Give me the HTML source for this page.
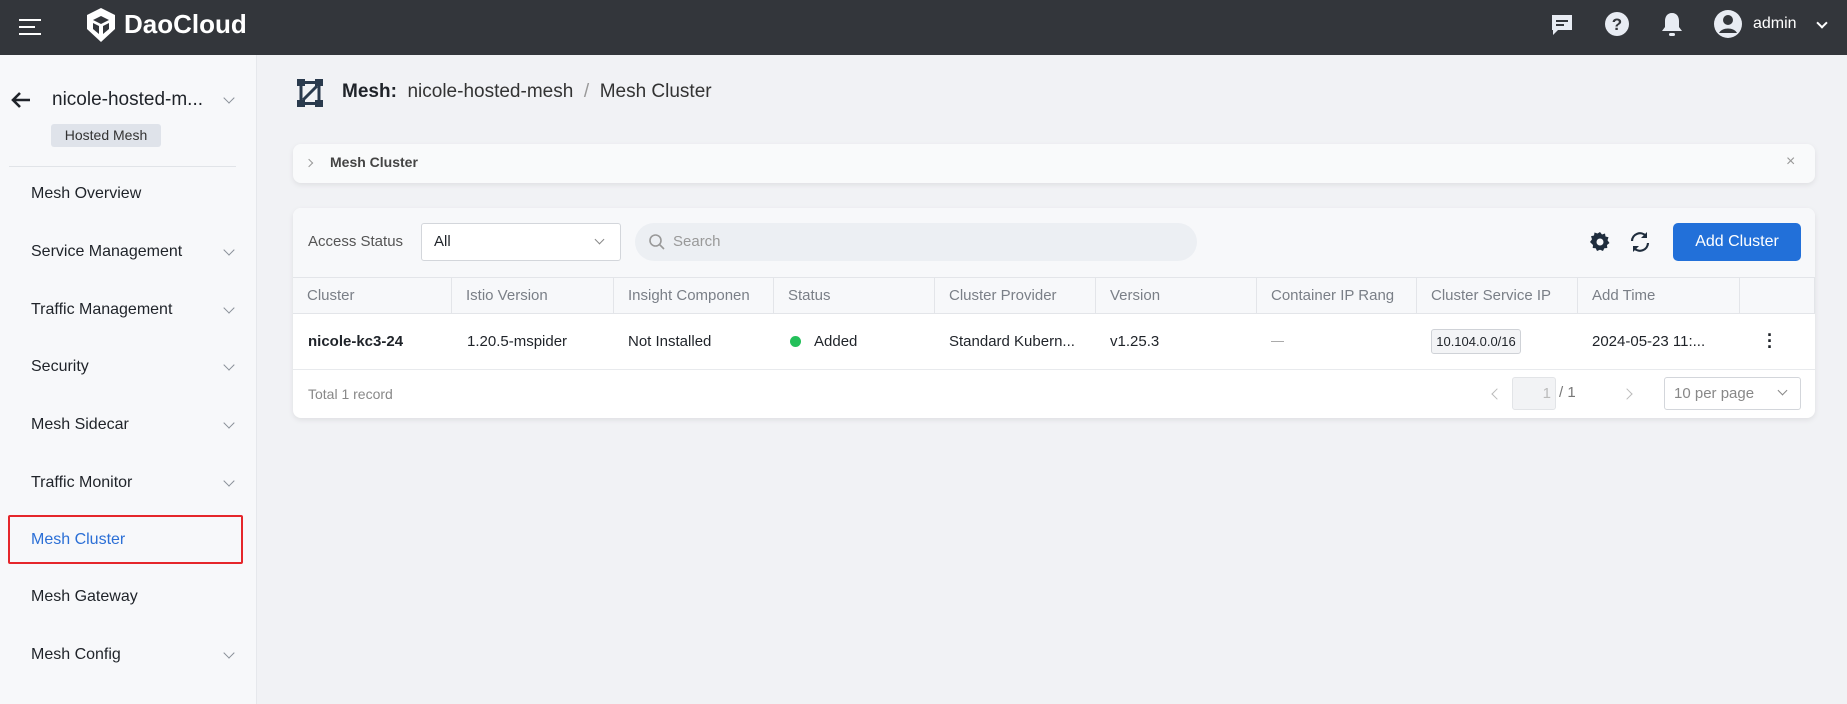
<!DOCTYPE html>
<html><head><meta charset="utf-8"><style>
*{box-sizing:border-box;margin:0;padding:0}
body{width:1847px;height:704px;overflow:hidden;background:#f1f2f5;font-family:"Liberation Sans",sans-serif;color:#1f2329;position:relative}
.abs{position:absolute}
.hdr{left:0;top:0;width:1847px;height:55px;background:#33363b}
.side{left:0;top:55px;width:257px;height:649px;background:#f7f8fa;border-right:1px solid #e6e8ec}
.nav{position:absolute;left:31px;font-size:16px;color:#1f2329}
.chev{position:absolute;left:225px;width:8px;height:8px;border-right:1.5px solid #8a9099;border-bottom:1.5px solid #8a9099;transform:rotate(45deg)}
.card{background:#fff;border-radius:8px;box-shadow:0 2px 6px rgba(0,0,0,.08)}
.th{position:absolute;top:277px;height:37px;line-height:37px;font-size:15px;color:#7a7f87;padding-left:14px;border-right:1px solid #e3e5e9;white-space:nowrap;overflow:hidden}
.td{position:absolute;top:333px;font-size:15px;color:#1f2329;white-space:nowrap}
</style></head><body>
<div class="abs hdr"></div>
<div class="abs" style="left:19px;top:19px;width:22px;height:2px;background:#fff"></div>
<div class="abs" style="left:19px;top:26px;width:16px;height:2px;background:#fff"></div>
<div class="abs" style="left:19px;top:33px;width:22px;height:2px;background:#fff"></div>
<svg class="abs" style="left:85px;top:7px" width="32" height="36" viewBox="0 0 32 36"><path d="M16 1 L30 8 L30 22 L16 35 L2 22 L2 8 Z" fill="#fff"/><path d="M16 9 L24 13 L16 17 L8 13 Z M8 16 L14 19 L14 27 L8 22Z M24 16 L18 19 L18 27 L24 22Z" fill="#33363b"/></svg>
<div class="abs" style="left:124px;top:9px;font-size:26px;font-weight:bold;color:#fff">DaoCloud</div>
<svg class="abs" style="left:1549px;top:12px" width="26" height="26" viewBox="0 0 26 26"><path d="M3 3h20v15H9l-5 5v-5H3z" fill="#e8ecf3"/><rect x="7" y="8" width="12" height="2" fill="#33363b"/><rect x="7" y="12" width="8" height="2" fill="#33363b"/></svg>
<svg class="abs" style="left:1604px;top:11px" width="26" height="26"><circle cx="13" cy="13" r="12" fill="#e8ecf3"/><text x="13" y="19" font-size="17" font-weight="bold" text-anchor="middle" fill="#33363b" font-family="Liberation Sans">?</text></svg>
<svg class="abs" style="left:1659px;top:10px" width="26" height="28" viewBox="0 0 26 28"><path d="M13 3c-5 0-7 4-7 8v6l-3 4h20l-3-4v-6c0-4-2-8-7-8z" fill="#e8ecf3"/><rect x="10" y="23" width="6" height="3" rx="1.5" fill="#e8ecf3"/></svg>
<svg class="abs" style="left:1713px;top:9px" width="30" height="30"><circle cx="15" cy="15" r="14" fill="#e8ecf3"/><circle cx="15" cy="11" r="5" fill="#33363b"/><path d="M6 24c3-6 15-6 18 0" fill="#33363b"/></svg>
<div class="abs" style="left:1753px;top:15px;font-size:16px;color:#fff">admin</div>
<div class="abs" style="left:1818px;top:19px;width:8px;height:8px;border-right:2px solid #fff;border-bottom:2px solid #fff;transform:rotate(45deg)"></div>

<div class="abs side"></div>
<svg class="abs" style="left:10px;top:90px" width="22" height="20"><path d="M20 10H3M10 3L3 10l7 7" stroke="#1f2329" stroke-width="2.6" fill="none"/></svg>
<div class="abs" style="left:52px;top:89px;font-size:19px;color:#1f2329">nicole-hosted-m...</div>
<div class="chev" style="top:94px"></div>
<div class="abs" style="left:51px;top:124px;width:110px;height:23px;background:#dfe3ea;border-radius:3px;font-size:14px;line-height:23px;text-align:center;color:#333">Hosted Mesh</div>
<div class="abs" style="left:9px;top:166px;width:227px;height:1px;background:#e1e4e8"></div>
<div class="nav" style="top:185px">Mesh Overview</div>
<div class="nav" style="top:243px">Service Management</div><div class="chev" style="top:246px"></div>
<div class="nav" style="top:301px">Traffic Management</div><div class="chev" style="top:304px"></div>
<div class="nav" style="top:358px">Security</div><div class="chev" style="top:361px"></div>
<div class="nav" style="top:416px">Mesh Sidecar</div><div class="chev" style="top:419px"></div>
<div class="nav" style="top:474px">Traffic Monitor</div><div class="chev" style="top:477px"></div>
<div class="abs" style="left:8px;top:515px;width:235px;height:49px;border:2px solid #e5262b;border-radius:2px"></div>
<div class="nav" style="top:531px;color:#2b6fd6">Mesh Cluster</div>
<div class="nav" style="top:588px">Mesh Gateway</div>
<div class="nav" style="top:646px">Mesh Config</div><div class="chev" style="top:649px"></div>

<svg class="abs" style="left:296px;top:78px" width="28" height="30" viewBox="0 0 28 30"><rect x="1" y="1" width="8" height="7" fill="#2a3a4d"/><rect x="19" y="1" width="8" height="7" fill="#2a3a4d"/><rect x="1" y="22" width="8" height="7" fill="#2a3a4d"/><rect x="19" y="22" width="8" height="7" fill="#2a3a4d"/><path d="M9 4.5h10M9 25.5h10M21 8L7 22M5 8v14M23 8v14" stroke="#2a3a4d" stroke-width="3" fill="none"/></svg>
<div class="abs" style="left:342px;top:81px;font-size:19px"><b>Mesh:</b>&nbsp; <span style="color:#333">nicole-hosted-mesh</span> &nbsp;<span style="color:#999">/</span>&nbsp; <span style="color:#333">Mesh Cluster</span></div>

<div class="abs card" style="left:293px;top:144px;width:1522px;height:39px;background:#f9fafb"></div>
<div class="abs" style="left:306px;top:160px;width:6px;height:6px;border-right:1.5px solid #999;border-top:1.5px solid #999;transform:rotate(45deg)"></div>
<div class="abs" style="left:330px;top:154px;font-size:14px;font-weight:bold;color:#444">Mesh Cluster</div>
<div class="abs" style="left:1786px;top:153px;font-size:16px;color:#999">×</div>

<div class="abs card" style="left:293px;top:208px;width:1522px;height:210px;overflow:hidden">
 <div style="position:absolute;left:0;top:0;width:100%;height:106px;background:#f7f8fa"></div>
</div>
<div class="abs" style="left:308px;top:233px;font-size:15px;color:#555">Access Status</div>
<div class="abs" style="left:421px;top:223px;width:200px;height:38px;background:#fff;border:1px solid #d3d6db;border-radius:3px"></div>
<div class="abs" style="left:434px;top:233px;font-size:15px">All</div>
<div class="abs" style="left:596px;top:236px;width:7px;height:7px;border-right:1.3px solid #888;border-bottom:1.3px solid #888;transform:rotate(45deg)"></div>
<div class="abs" style="left:635px;top:223px;width:562px;height:38px;background:#eceff3;border-radius:19px"></div>
<svg class="abs" style="left:648px;top:233px" width="18" height="18"><circle cx="7.5" cy="7.5" r="5.5" stroke="#999" stroke-width="1.6" fill="none"/><path d="M11.5 11.5l4.5 4.5" stroke="#999" stroke-width="1.6"/></svg>
<div class="abs" style="left:673px;top:233px;font-size:15px;color:#999">Search</div>
<svg class="abs" style="left:1589px;top:231px" width="22" height="22" viewBox="0 0 22 22"><path d="M11 1l2 2.5 3-1 .5 3 3 .8-1 3 2 2.7-2.5 2 .3 3-3 .3-1.3 2.7-3-1.3-3 1.3-1.3-2.7-3-.3.3-3L1 11l2-2.7-1-3 3-.8.5-3 3 1z" fill="#1f2d3d"/><circle cx="11" cy="11" r="3.5" fill="#f7f8fa"/></svg>
<svg class="abs" style="left:1628px;top:230px" width="24" height="24" viewBox="0 0 24 24"><path d="M4 11a8 8 0 0 1 14-5M20 13a8 8 0 0 1-14 5" stroke="#1f2d3d" stroke-width="2.2" fill="none"/><path d="M19 2v6h-6z" fill="#1f2d3d"/><path d="M5 22v-6h6z" fill="#1f2d3d"/></svg>
<div class="abs" style="left:1673px;top:223px;width:128px;height:38px;background:#2270d9;border-radius:5px;color:#fff;font-size:16px;line-height:38px;text-align:center">Add Cluster</div>

<div class="abs" style="left:293px;top:277px;width:1522px;height:37px;background:#f7f8fa;border-top:1px solid #e3e5e9;border-bottom:1px solid #e3e5e9"></div>
<div class="th" style="left:293px;width:159px">Cluster</div>
<div class="th" style="left:452px;width:162px">Istio Version</div>
<div class="th" style="left:614px;width:160px">Insight Componen</div>
<div class="th" style="left:774px;width:161px">Status</div>
<div class="th" style="left:935px;width:161px">Cluster Provider</div>
<div class="th" style="left:1096px;width:161px">Version</div>
<div class="th" style="left:1257px;width:160px">Container IP Rang</div>
<div class="th" style="left:1417px;width:161px">Cluster Service IP</div>
<div class="th" style="left:1578px;width:162px">Add Time</div>
<div class="th" style="left:1740px;width:75px"></div>
<div class="abs" style="left:293px;top:369px;width:1522px;height:1px;background:#e8eaed"></div>
<div class="td" style="left:308px;font-weight:bold">nicole-kc3-24</div>
<div class="td" style="left:467px">1.20.5-mspider</div>
<div class="td" style="left:628px">Not Installed</div>
<div class="abs" style="left:790px;top:336px;width:11px;height:11px;border-radius:50%;background:#24c05a"></div>
<div class="td" style="left:814px">Added</div>
<div class="td" style="left:949px">Standard Kubern...</div>
<div class="td" style="left:1110px">v1.25.3</div>
<div class="abs" style="left:1271px;top:341px;width:13px;height:1px;background:#aaa"></div>
<div class="abs" style="left:1431px;top:329px;width:90px;height:25px;background:#f3f4f6;border:1px solid #cfd2d7;border-radius:3px;font-size:13px;line-height:23px;text-align:center;white-space:nowrap;padding:0 4px">10.104.0.0/16</div>
<div class="td" style="left:1592px">2024-05-23 11:...</div>
<div class="abs" style="left:1767px;top:332px;font-size:18px;font-weight:bold;line-height:6px">·<br>·<br>·</div>
<div class="abs" style="left:308px;top:386px;font-size:14px;color:#888">Total 1 record</div>
<div class="abs" style="left:1493px;top:390px;width:8px;height:8px;border-left:1.3px solid #bbb;border-bottom:1.3px solid #bbb;transform:rotate(45deg)"></div>
<div class="abs" style="left:1512px;top:377px;width:44px;height:33px;background:#f2f3f5;border:1px solid #e2e4e7;border-radius:3px;text-align:right;padding-right:4px;line-height:31px;font-size:15px;color:#bbb">1</div>
<div class="abs" style="left:1559px;top:384px;font-size:15px;color:#777">/ 1</div>
<div class="abs" style="left:1623px;top:390px;width:8px;height:8px;border-right:1.3px solid #bbb;border-top:1.3px solid #bbb;transform:rotate(45deg)"></div>
<div class="abs" style="left:1664px;top:377px;width:137px;height:33px;border:1px solid #d3d6db;border-radius:3px;font-size:15px;color:#888;line-height:31px;padding-left:9px">10 per page</div>
<div class="abs" style="left:1779px;top:387px;width:7px;height:7px;border-right:1.3px solid #888;border-bottom:1.3px solid #888;transform:rotate(45deg)"></div>
</body></html>
